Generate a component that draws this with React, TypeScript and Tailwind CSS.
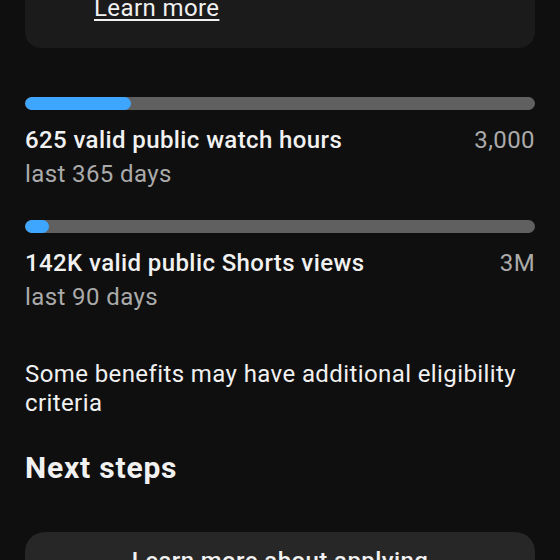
import React from "react";

const goals = [
  { label: "625 valid public watch hours", target: "3,000", period: "last 365 days", pct: 625 / 3000 },
  { label: "142K valid public Shorts views", target: "3M", period: "last 90 days", pct: 142 / 3000 },
];

function Goal({ g, first }: { g: (typeof goals)[number]; first: boolean }) {
  return (
    <div className={first ? "mt-[49px]" : "mt-[31px]"}>
      <div className="h-[13px] w-full rounded-full bg-[#606060] overflow-hidden">
        <div className="h-full rounded-full bg-[#3ea6ff]" style={{ width: `${g.pct * 100}%` }} />
      </div>
      <div className="mt-[15px] flex justify-between text-[24px] leading-[30px] tracking-[0.4px]">
        <span className="font-medium text-[#f1f1f1]">{g.label}</span>
        <span className="text-[#aaaaaa]">{g.target}</span>
      </div>
      <div className="mt-[4px] text-[24px] leading-[30px] tracking-[0.4px] text-[#aaaaaa]">{g.period}</div>
    </div>
  );
}

export default function App() {
  return (
    <div
      className="h-[560px] w-[560px] overflow-hidden bg-[#0f0f0f] px-[25px]"
      style={{ fontFamily: "Roboto, 'Noto Sans', sans-serif" }}
    >
      <div className="-mt-[7px] rounded-b-2xl bg-[#1b1b1b] pb-[25px] pl-[69px]">
        <a className="text-[24px] leading-[30px] tracking-[0.4px] text-[#f1f1f1] underline underline-offset-[3px]">
          Learn more
        </a>
      </div>

      {goals.map((g, i) => (
        <Goal key={g.label} g={g} first={i === 0} />
      ))}

      <p className="mt-[48px] text-[24px] leading-[29px] tracking-[0.4px] text-[#f1f1f1]">
        Some benefits may have additional eligibility criteria
      </p>

      <h2 className="mt-[32px] text-[30px] leading-[36px] tracking-[0.8px] font-bold text-[#f1f1f1]">Next steps</h2>

      <button
        type="button"
        className="mt-[46px] w-full rounded-[20px] bg-[#272727] py-[14px] text-[24px] leading-[30px] tracking-[0.4px] font-medium text-[#f1f1f1]"
      >
        Learn more about applying
      </button>
    </div>
  );
}
